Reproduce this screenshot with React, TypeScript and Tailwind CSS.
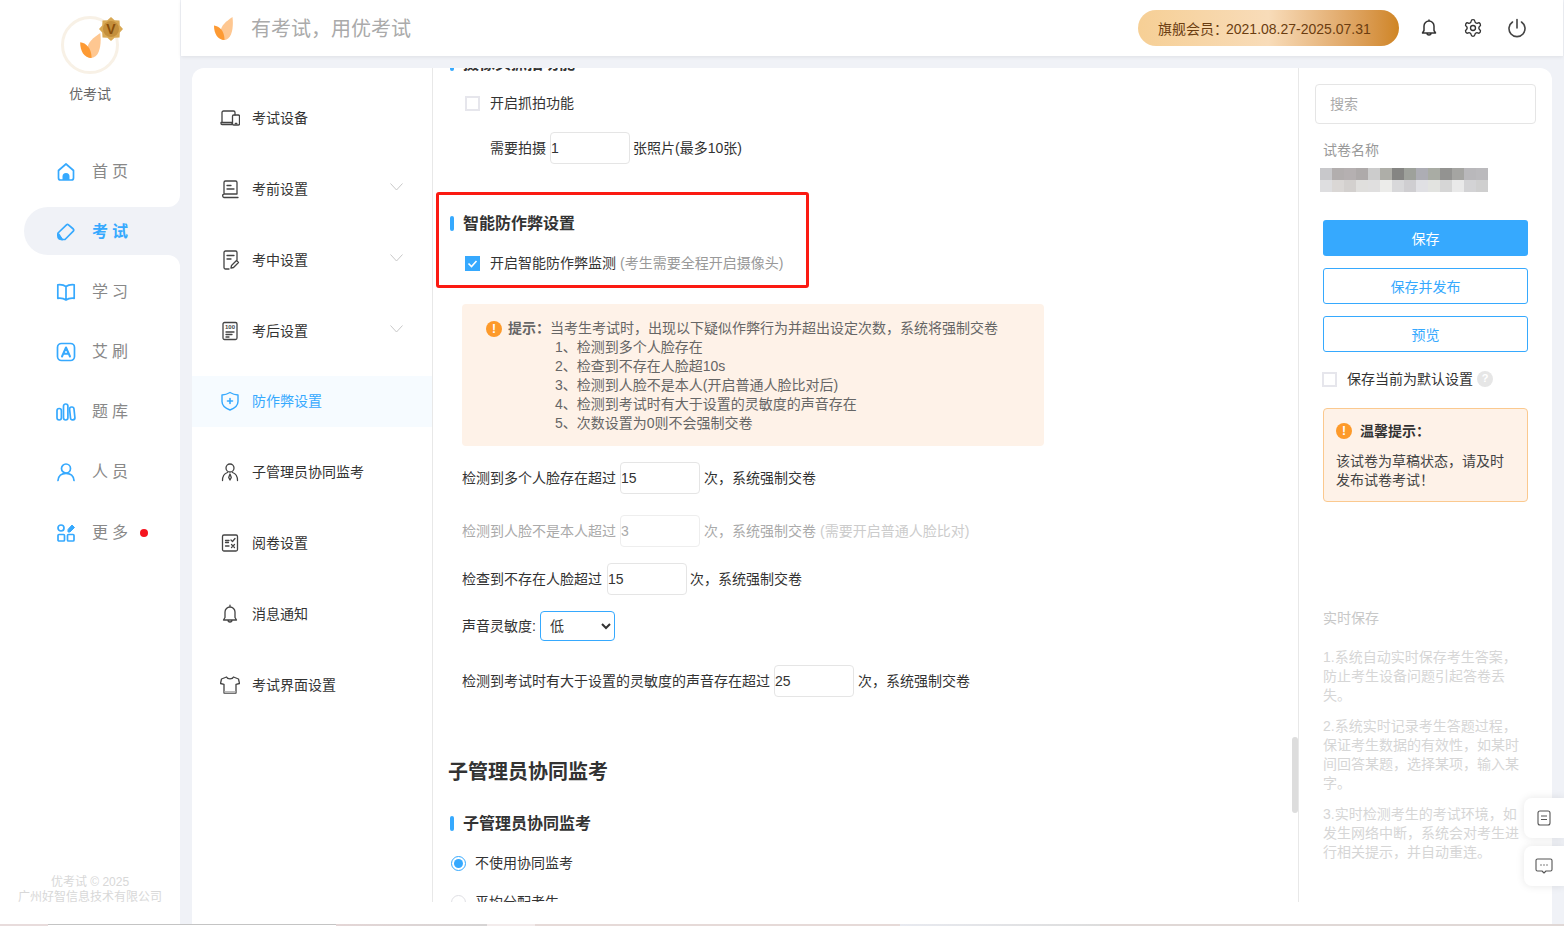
import React from "react";
import { Settings } from "lucide-react";

function Leaf({ className }: { className: string }) {
  return (
    <svg viewBox="0 0 19 23" className={className}>
      <path d="M18.500 0C19.500 8 19 23 9.500 23C7 23 6.500 19.500 6.500 15.500C6.500 8.500 12.500 4 18.500 0Z" fill="#fec791" />
      <path d="M0 8.500C5.500 9 10.500 14 10.500 23C3.500 23 0 16.500 0 8.500Z" fill="#fd9a33" />
    </svg>
  );
}

const blue = "#36a9fe";
const S = { fill: "none", stroke: blue, strokeWidth: 1.7, strokeLinejoin: "round" as const, strokeLinecap: "round" as const };

const mainIcons: Record<string, React.ReactNode> = {
  home: (
    <svg viewBox="0 0 20 20" className="w-5 h-5">
      <path d="M2.500 8.500L10 2l7.500 6.500V16a2 2 0 0 1-2 2h-11a2 2 0 0 1-2-2Z" {...S} />
      <path d="M6.500 18v-3.500a3.500 3.500 0 0 1 7 0V18Z" fill={blue} />
    </svg>
  ),
  exam: (
    <svg viewBox="0 0 20 20" className="w-5 h-5">
      <path d="M2 11L10.500 2.800a1.500 1.500 0 0 1 2 0l4.800 4.200a1.500 1.500 0 0 1 0 2.200L9 17.500H6Z" {...S} />
      <path d="M1.500 11.500L7 17.800H5a3.500 3.500 0 0 1-3.500-3.500Z" fill={blue} stroke={blue} strokeWidth="1" />
    </svg>
  ),
  study: (
    <svg viewBox="0 0 20 20" className="w-5 h-5">
      <path d="M10 4.500C8 3 5 2.500 1.800 2.800v13.500C5 16 8 16.500 10 18c2-1.500 5-2 8.200-1.700V2.800C15 2.500 12 3 10 4.500ZM10 4.500V18" {...S} />
    </svg>
  ),
  shua: (
    <svg viewBox="0 0 20 20" className="w-5 h-5">
      <rect x="1.500" y="1.500" width="17" height="17" rx="4" {...S} />
      <path d="M6 14.500L10 5.500l4 9M7.300 11.800h5.400" {...S} strokeWidth="2" />
    </svg>
  ),
  bank: (
    <svg viewBox="0 0 20 20" className="w-5 h-5">
      <rect x="1" y="6.500" width="4.400" height="11.500" rx="2.200" {...S} />
      <rect x="7.500" y="2" width="4.400" height="16" rx="2.200" {...S} />
      <rect x="14" y="5" width="4.400" height="13" rx="2.200" {...S} transform="rotate(-6 16 11)" />
    </svg>
  ),
  user: (
    <svg viewBox="0 0 20 20" className="w-5 h-5">
      <circle cx="10" cy="6.500" r="4.500" {...S} />
      <path d="M2 18.500c.3-4.500 3.500-7.200 8-7.200s7.700 2.700 8 7.200" {...S} />
    </svg>
  ),
  more: (
    <svg viewBox="0 0 20 20" className="w-5 h-5">
      <circle cx="5" cy="5" r="3" {...S} />
      <rect x="2" y="11.500" width="6.500" height="6.500" rx="1" {...S} />
      <rect x="11.500" y="11.500" width="6.500" height="6.500" rx="1" {...S} />
      <path d="M12 6.500L16 2l2.500 2.500L14 9h-2Z" fill={blue} stroke={blue} strokeWidth="1" />
    </svg>
  ),
};

const D = { fill: "none", stroke: "#444", strokeWidth: 1.3, strokeLinejoin: "round" as const, strokeLinecap: "round" as const };

const subIcons: Record<string, React.ReactNode> = {
  device: (
    <svg viewBox="0 0 20 20" className="w-5 h-5">
      <path d="M2 14V4.500A1.500 1.500 0 0 1 3.500 3h10A1.500 1.500 0 0 1 15 4.500V7M1 14.500h11v2H2a1 1 0 0 1-1-1Z" {...D} />
      <rect x="12.500" y="7" width="7" height="10" rx="1.200" {...D} />
      <path d="M15.300 15.500h1.500" {...D} />
    </svg>
  ),
  before: (
    <svg viewBox="0 0 20 20" className="w-5 h-5">
      <path d="M4 15V3.500A1.500 1.500 0 0 1 5.500 2h10A1.500 1.500 0 0 1 17 3.500V15H4a1.800 1.800 0 0 0 0 3.500h14" {...D} />
      <path d="M7 6.500h4M7 10h7" {...D} />
    </svg>
  ),
  during: (
    <svg viewBox="0 0 20 20" className="w-5 h-5">
      <path d="M9 19H5.500A1.500 1.500 0 0 1 4 17.500v-15A1.500 1.500 0 0 1 5.500 1h10A1.500 1.500 0 0 1 17 2.500V10" {...D} />
      <path d="M7 5.500h7M7 9h4M11 18l.5-2.500 5-5 2 2-5 5Z" {...D} />
    </svg>
  ),
  after: (
    <svg viewBox="0 0 20 20" className="w-5 h-5">
      <rect x="3" y="1.500" width="14" height="17" rx="1.500" {...D} />
      <text x="10" y="7.800" textAnchor="middle" fontSize="6" fontWeight="700" fill="#444" fontFamily="Liberation Sans">100</text>
      <path d="M6 11h8M6 13.500h6M6 16h3" {...D} />
    </svg>
  ),
  shield: (
    <svg viewBox="0 0 20 20" className="w-5 h-5">
      <path d="M10 1.500c2.500 1.500 5 2.300 8 2.500v6.500c0 4-3.500 6.800-8 8.500-4.500-1.700-8-4.500-8-8.500V4c3-.2 5.500-1 8-2.500Z" fill="none" stroke={blue} strokeWidth="1.400" strokeLinejoin="round" />
      <path d="M10 7.500v5M7.500 10h5" fill="none" stroke={blue} strokeWidth="1.600" strokeLinecap="round" />
    </svg>
  ),
  sub: (
    <svg viewBox="0 0 20 20" className="w-5 h-5">
      <circle cx="10" cy="6" r="4" {...D} />
      <path d="M2.500 18.500c0-4 2-7 5-8M17.500 18.500c0-4-2-7-5-8" {...D} />
      <path d="M10 12l1.300 3.500L10 18l-1.300-2.500Z" {...D} />
    </svg>
  ),
  mark: (
    <svg viewBox="0 0 20 20" className="w-5 h-5">
      <rect x="2.500" y="2" width="15" height="16" rx="1.500" {...D} />
      <path d="M5.500 7.500h3.500M5.500 13h3.500M5.500 9.500h3M11 7l1.500 1.500L15 5.500M11.500 11.500l3 3M14.500 11.500l-3 3" {...D} />
    </svg>
  ),
  bell: (
    <svg viewBox="0 0 20 20" className="w-5 h-5">
      <path d="M3.500 16h13l-1.500-2.500V8a5 5 0 0 0-10 0v5.500ZM10 3V1.200M8 16a2 2 0 0 0 4 0" {...D} />
    </svg>
  ),
  shirt: (
    <svg viewBox="0 0 20 20" className="w-5 h-5">
      <path d="M6.500 2c1 2.500 6 2.500 7 0l5 2 1 4.500-3.500.8v8.700H4V9.300L.5 8.500l1-4.500Z" {...D} />
      <path d="M4.500 16h11v2h-11Z" fill="#bbb" />
    </svg>
  ),
};

function Check({ checked = false }: { checked?: boolean }) {
  if (checked) {
    return (
      <span className="w-[15px] h-[15px] bg-[#36a9fe] flex items-center justify-center shrink-0">
        <svg viewBox="0 0 15 15" className="w-[15px] h-[15px]">
          <path d="M3.500 7.500L6.500 10.500L11.500 5" fill="none" stroke="#fff" strokeWidth="1.600" />
        </svg>
      </span>
    );
  }
  return <span className="w-[15px] h-[15px] border-2 border-[#e6e6ec] bg-white block shrink-0" />;
}

function Warn({ className }: { className: string }) {
  return (
    <span className={`rounded-full bg-[#fd9a2a] text-white font-bold flex items-center justify-center shrink-0 text-xs leading-none ${className}`}>!</span>
  );
}

function Num({ value, disabled = false }: { value: string; disabled?: boolean }) {
  return (
    <input
      readOnly
      value={value}
      className={`w-20 h-8 shrink-0 border rounded-[4px] pl-0 outline-none bg-white ${disabled ? "text-[#aaa] border-[#eeeeee]" : "text-[#333] border-[#e5e5e5]"}`}
    />
  );
}

function Heading({ children }: { children: React.ReactNode }) {
  return (
    <div className="flex items-center h-6">
      <span className="w-1 h-[15px] rounded-[2px] bg-[#36a9fe] ml-[17px] mr-[9px]" />
      <span className="text-base font-bold text-[#333] pt-[2px]">{children}</span>
    </div>
  );
}

const NAV = [
  ["home", "首", "页"],
  ["exam", "考", "试"],
  ["study", "学", "习"],
  ["shua", "艾", "刷"],
  ["bank", "题", "库"],
  ["user", "人", "员"],
  ["more", "更", "多"],
];

const SUB: [string, string, boolean][] = [
  ["device", "考试设备", false],
  ["before", "考前设置", true],
  ["during", "考中设置", true],
  ["after", "考后设置", true],
  ["shield", "防作弊设置", false],
  ["sub", "子管理员协同监考", false],
  ["mark", "阅卷设置", false],
  ["bell", "消息通知", false],
  ["shirt", "考试界面设置", false],
];

const MOSAIC = [
  "bg-[#c8c8cb]", "bg-[#b2aeae]", "bg-[#b5b0b1]", "bg-[#aeaaaa]", "bg-[#cccccc]", "bg-[#aeaea8]", "bg-[#858583]",
  "bg-[#9ea19b]", "bg-[#adadb4]", "bg-[#a9aca4]", "bg-[#939391]", "bg-[#a5a5a2]", "bg-[#b9b8bb]", "bg-[#bbbabd]",
  "bg-[#dedee0]", "bg-[#dad7d5]", "bg-[#d3d0ce]", "bg-[#e0dfdd]", "bg-[#e0dfdf]", "bg-[#ececea]", "bg-[#d8d8da]",
  "bg-[#cfced1]", "bg-[#e0e0e4]", "bg-[#e2e3e0]", "bg-[#d6d6d6]", "bg-[#e9e9e9]", "bg-[#d3d3d5]", "bg-[#cfcfcf]",
];

export default function App() {
  return (
    <div className="w-[1564px] h-[926px] overflow-hidden relative bg-[#f0f2f7] text-sm text-[#333] font-['Liberation_Sans','Noto_Sans_CJK_SC',sans-serif]">
      <div className="flex h-[924px]">
        {/* sidebar */}
        <aside className="w-[180px] shrink-0 bg-white flex flex-col">
          <div className="relative w-[58px] h-[58px] ml-[61px] mt-4 rounded-full border-[3px] border-[#f8f1e6] flex items-center justify-center">
            <Leaf className="w-[21px] h-[25px]" />
            <svg viewBox="0 0 24 24" className="absolute w-6 h-6 -top-[2px] -right-[7px]">
              <path d="M12 0L15.600 3.200 20.500 3.500 20.800 8.400 24 12 20.800 15.600 20.500 20.500 15.600 20.800 12 24 8.400 20.800 3.500 20.500 3.200 15.600 0 12 3.200 8.400 3.500 3.500 8.400 3.200Z" fill="#d9a955" />
              <circle cx="12" cy="12" r="8" fill="#c48f3c" />
              <text x="12" y="17" textAnchor="middle" fontSize="14" fontWeight="700" fill="#8a4f0c" fontFamily="Liberation Sans">V</text>
            </svg>
          </div>
          <div className="text-center text-[#666] mt-[10px] leading-5">优考试</div>
          <nav className="mt-[43px] flex flex-col gap-[12.1px]">
            {NAV.map(([icon, a, b], i) => {
              const active = i === 1;
              return (
                <div key={icon} className={`relative h-12 flex items-center pl-[33px] pt-[2px] ml-6 ${active ? "bg-[#f0f2f7] rounded-l-[24px]" : ""}`}>
                  {active && (
                    <>
                      <span className="absolute right-0 -top-3 w-5 h-3 bg-[#f0f2f7]">
                        <span className="block w-full h-full bg-white rounded-br-[20px]" />
                      </span>
                      <span className="absolute right-0 -bottom-3 w-5 h-3 bg-[#f0f2f7]">
                        <span className="block w-full h-full bg-white rounded-tr-[20px]" />
                      </span>
                    </>
                  )}
                  <span className="w-5 h-5 shrink-0 -ml-[1px]">{mainIcons[icon]}</span>
                  <span className={`ml-4 text-base flex gap-1 ${active ? "text-[#36a9fe] font-bold" : "text-[#888]"}`}>
                    <span>{a}</span>
                    <span>{b}</span>
                  </span>
                  {icon === "more" && <span className="ml-3 w-2 h-2 rounded-full bg-[#f5141e]" />}
                </div>
              );
            })}
          </nav>
          <div className="mt-auto pb-[19px] text-center text-xs leading-[15px] text-[#d8d8d8]">
            <div>优考试 © 2025</div>
            <div>广州好智信息技术有限公司</div>
          </div>
        </aside>

        {/* main */}
        <main className="flex-1 min-w-0 flex flex-col">
          <header className="relative z-10 h-14 shrink-0 bg-white mr-[1px] ml-[1px] shadow-[0_1px_4px_rgba(0,0,0,0.08)] flex items-center pl-[33px] pr-[36px]">
            <Leaf className="w-[19px] h-[23px]" />
            <span className="ml-[18px] pt-[2px] text-xl text-[#aaaaaa]">有考试，用优考试</span>
            <div className="ml-auto w-[261px] h-9 rounded-[18px] pl-5 pt-[2px] flex items-center whitespace-nowrap text-[#6b3d10] bg-gradient-to-r from-[#f6cf95] via-[#f8dcb9] to-[#cf8522]">
              <span className="w-[68px] shrink-0">旗舰会员：</span>
              <span>2021.08.27-2025.07.31</span>
            </div>
            <svg viewBox="0 0 20 20" className="w-5 h-5 ml-5">
              <path d="M3.500 15h13l-1.500-2.500V8a5 5 0 0 0-10 0v4.500ZM10 3V1.500M8 15a2 2 0 0 0 4 0" fill="none" stroke="#333" strokeWidth="1.500" strokeLinejoin="round" />
            </svg>
            <Settings className="w-5 h-5 ml-6 text-[#333]" strokeWidth={1.6} />
            <svg viewBox="0 0 20 20" className="w-5 h-5 ml-6" fill="none" stroke="#444" strokeWidth="1.600" strokeLinecap="round">
              <path d="M10 1.500V10M5.500 4a8 8 0 1 0 9 0" />
            </svg>
          </header>

          <section className="flex-1 mt-3 ml-3 mr-3 bg-white rounded-t-xl">
            <div className="flex h-[834px]">
              {/* sub nav */}
              <div className="w-[241px] shrink-0 border-r border-[#e8e8e8] pt-[24.4px]">
                {SUB.map(([icon, label, arrow]) => {
                  const active = icon === "shield";
                  return (
                    <div key={icon} className={`h-[51px] mb-[19.875px] flex items-center pl-[28px] pr-[29px] ${active ? "bg-[#f6fbff] text-[#36a9fe]" : ""}`}>
                      <span className="w-5 h-5 shrink-0">{subIcons[icon]}</span>
                      <span className="ml-3">{label}</span>
                      {arrow && (
                        <svg viewBox="0 0 13 8" className="ml-auto w-[13px] h-2 -mt-[3px]">
                          <path d="M0.500 0.500L6.500 7L12.500 0.500" fill="none" stroke="#c8c8c8" strokeWidth="1" />
                        </svg>
                      )}
                    </div>
                  );
                })}
              </div>

              {/* content */}
              <div className="relative flex-1 min-w-0 overflow-hidden">
                <div className="-mt-[17px]">
                  <Heading>摄像头抓拍功能</Heading>
                </div>
                <div className="mt-[18px] h-5 ml-8 flex items-center">
                  <Check />
                  <span className="ml-[10px]">开启抓拍功能</span>
                </div>
                <div className="mt-[19px] ml-[57px] flex items-center">
                  <span className="mr-[4px]">需要拍摄</span>
                  <Num value="1" />
                  <span className="ml-[3px]">张照片(最多10张)</span>
                </div>
                <div className="mt-[47px]">
                  <Heading>智能防作弊设置</Heading>
                </div>
                <div className="mt-[18px] h-5 ml-8 flex items-center">
                  <Check checked />
                  <span className="ml-[10px]">开启智能防作弊监测</span>
                  <span className="ml-1 text-[#999]">(考生需要全程开启摄像头)</span>
                </div>
                <div className="mt-[31px] ml-[29px] w-[582px] h-[142px] bg-[#fef2e8] rounded-[4px] pl-6 pt-[15px] text-[#666] leading-[19px]">
                  <div className="flex items-center">
                    <Warn className="w-4 h-4" />
                    <span className="ml-[6px] font-bold">提示：</span>
                    <span>当考生考试时，出现以下疑似作弊行为并超出设定次数，系统将强制交卷</span>
                  </div>
                  <div className="ml-[69px]">
                    <div>1、检测到多个人脸存在</div>
                    <div>2、检查到不存在人脸超10s</div>
                    <div>3、检测到人脸不是本人(开启普通人脸比对后)</div>
                    <div>4、检测到考试时有大于设置的灵敏度的声音存在</div>
                    <div>5、次数设置为0则不会强制交卷</div>
                  </div>
                </div>
                <div className="mt-4 ml-[29px] flex items-center">
                  <span className="mr-1">检测到多个人脸存在超过</span>
                  <Num value="15" />
                  <span className="ml-1">次，系统强制交卷</span>
                </div>
                <div className="mt-[21px] ml-[29px] flex items-center text-[#aaa]">
                  <span className="mr-1">检测到人脸不是本人超过</span>
                  <Num value="3" disabled />
                  <span className="ml-1">次，系统强制交卷</span>
                  <span className="ml-1 text-[#cccccc]">(需要开启普通人脸比对)</span>
                </div>
                <div className="mt-4 ml-[29px] flex items-center">
                  <span className="mr-[5px]">检查到不存在人脸超过</span>
                  <Num value="15" />
                  <span className="ml-[3px]">次，系统强制交卷</span>
                </div>
                <div className="mt-4 ml-[29px] flex items-center">
                  <span className="w-[78px]">声音灵敏度:</span>
                  <select defaultValue="低" className="w-[75px] h-[30px] border border-[#36a9fe] rounded-[4px] pl-[5px] outline-none bg-white text-[#333]">
                    <option>低</option>
                    <option>中</option>
                    <option>高</option>
                  </select>
                </div>
                <div className="mt-6 ml-[29px] flex items-center">
                  <span className="mr-1">检测到考试时有大于设置的灵敏度的声音存在超过</span>
                  <Num value="25" />
                  <span className="ml-1">次，系统强制交卷</span>
                </div>
                <div className="mt-[60px] ml-[15px] h-[30px] leading-[30px] text-xl font-bold text-[#333]">子管理员协同监考</div>
                <div className="mt-6">
                  <Heading>子管理员协同监考</Heading>
                </div>
                <div className="mt-[18px] ml-[18px] h-5 flex items-center">
                  <span className="w-[15px] h-[15px] rounded-full border border-[#36a9fe] flex items-center justify-center">
                    <span className="w-[9px] h-[9px] rounded-full bg-[#36a9fe]" />
                  </span>
                  <span className="ml-[9px]">不使用协同监考</span>
                </div>
                <div className="mt-[19px] ml-[18px] h-5 flex items-center">
                  <span className="w-[15px] h-[15px] rounded-full border border-[#dfdfe4]" />
                  <span className="ml-[9px]">平均分配考生</span>
                </div>
                <div className="absolute right-0 top-[669px] w-[6px] h-[76px] rounded-[3px] bg-[#dddddd]" />
              </div>

              {/* right panel */}
              <div className="w-[254px] shrink-0 border-l border-[#e8e8e8] px-6 pt-4">
                <div className="-mx-2 h-10 border border-[#e5e5e5] rounded-[4px] pl-[14px] flex items-center text-[#aaa]">搜索</div>
                <div className="mt-4 leading-5 text-[#999]">试卷名称</div>
                <div className="mt-2 -ml-[3px] w-[168px] grid grid-cols-[repeat(14,12px)] grid-rows-[repeat(2,12px)]">
                  {MOSAIC.map((c, i) => (
                    <span key={i} className={`block ${c}`} />
                  ))}
                </div>
                <div className="mt-7 h-9 pt-[2px] rounded-[3px] bg-[#36a9fe] text-white flex items-center justify-center">保存</div>
                <div className="mt-3 h-9 pt-[2px] rounded-[3px] border border-[#36a9fe] text-[#36a9fe] flex items-center justify-center">保存并发布</div>
                <div className="mt-3 h-9 pt-[2px] rounded-[3px] border border-[#36a9fe] text-[#36a9fe] flex items-center justify-center">预览</div>
                <div className="mt-[17px] h-5 flex items-center -ml-[1px]">
                  <Check />
                  <span className="ml-[10px]">保存当前为默认设置</span>
                  <span className="ml-1 w-4 h-4 rounded-full bg-[#e6e6e6] text-white text-[11px] font-bold flex items-center justify-center">?</span>
                </div>
                <div className="mt-[19px] h-[94px] rounded-[4px] border border-[#fbc98f] bg-[#fef2e8] pl-3 pr-[13px] pt-[12px] text-[#444] leading-[19px]">
                  <div className="flex items-center h-5">
                    <Warn className="w-4 h-4" />
                    <span className="ml-2 font-bold text-[#333]">温馨提示：</span>
                  </div>
                  <div className="mt-[11px]">该试卷为草稿状态，请及时发布试卷考试！</div>
                </div>
                <div className="mt-[106px] leading-5 text-[#c8c8c8]">实时保存</div>
                <div className="text-[#d6d6d6] leading-[19px]">
                  <p className="mt-5">1.系统自动实时保存考生答案，防止考生设备问题引起答卷丢失。</p>
                  <p className="mt-3">2.系统实时记录考生答题过程，保证考生数据的有效性，如某时间回答某题，选择某项，输入某字。</p>
                  <p className="mt-3">3.实时检测考生的考试环境，如发生网络中断，系统会对考生进行相关提示，并自动重连。</p>
                </div>
              </div>
            </div>
          </section>
        </main>
      </div>

      {/* annotation box */}
      <div className="absolute left-[436px] top-[192px] w-[373px] h-[96px] border-[3px] border-[#fb1a12] rounded-[3px]" />

      {/* floating buttons */}
      <div className="absolute right-0 top-[798px] w-10 h-10 bg-white rounded-l-lg shadow-[0_0_8px_rgba(0,0,0,0.1)] flex items-center justify-center">
        <svg viewBox="0 0 16 16" className="w-4 h-4" fill="none" stroke="#555" strokeWidth="1.100">
          <rect x="2" y="1" width="12" height="14" rx="2" />
          <path d="M5 6h6M5 9.500h6" />
        </svg>
      </div>
      <div className="absolute right-0 top-[846px] w-10 h-10 bg-white rounded-l-lg shadow-[0_0_8px_rgba(0,0,0,0.1)] flex items-center justify-center">
        <svg viewBox="0 0 18 16" className="w-[18px] h-4" fill="none" stroke="#555" strokeWidth="1.100" strokeLinejoin="round">
          <path d="M2.500 1h13A1.500 1.500 0 0 1 17 2.500v9a1.500 1.500 0 0 1-1.500 1.500H11l-2 2-2-2H2.500A1.500 1.500 0 0 1 1 11.500v-9A1.500 1.500 0 0 1 2.500 1Z" />
          <path d="M5.500 7h1M8.500 7h1M11.500 7h1" strokeWidth="1.400" />
        </svg>
      </div>

      {/* bottom window strip */}
      <div className="absolute left-0 right-0 bottom-0 h-[2px] flex">
        <div className="w-12 bg-[#e8dcdc]" />
        <div className="w-[288px] bg-white border-t border-[#c4c4c4]" />
        <div className="w-[151px] bg-gradient-to-r from-[#e4d6d6] to-[#d6d4d4]" />
        <div className="w-12 bg-[#f3ecec]" />
        <div className="w-[365px] bg-[#e6dad8]" />
        <div className="w-[200px] bg-gradient-to-r from-[#e8eaf0] to-[#dddddd]" />
        <div className="flex-1 bg-[#e0d8d6]" />
      </div>
    </div>
  );
}
